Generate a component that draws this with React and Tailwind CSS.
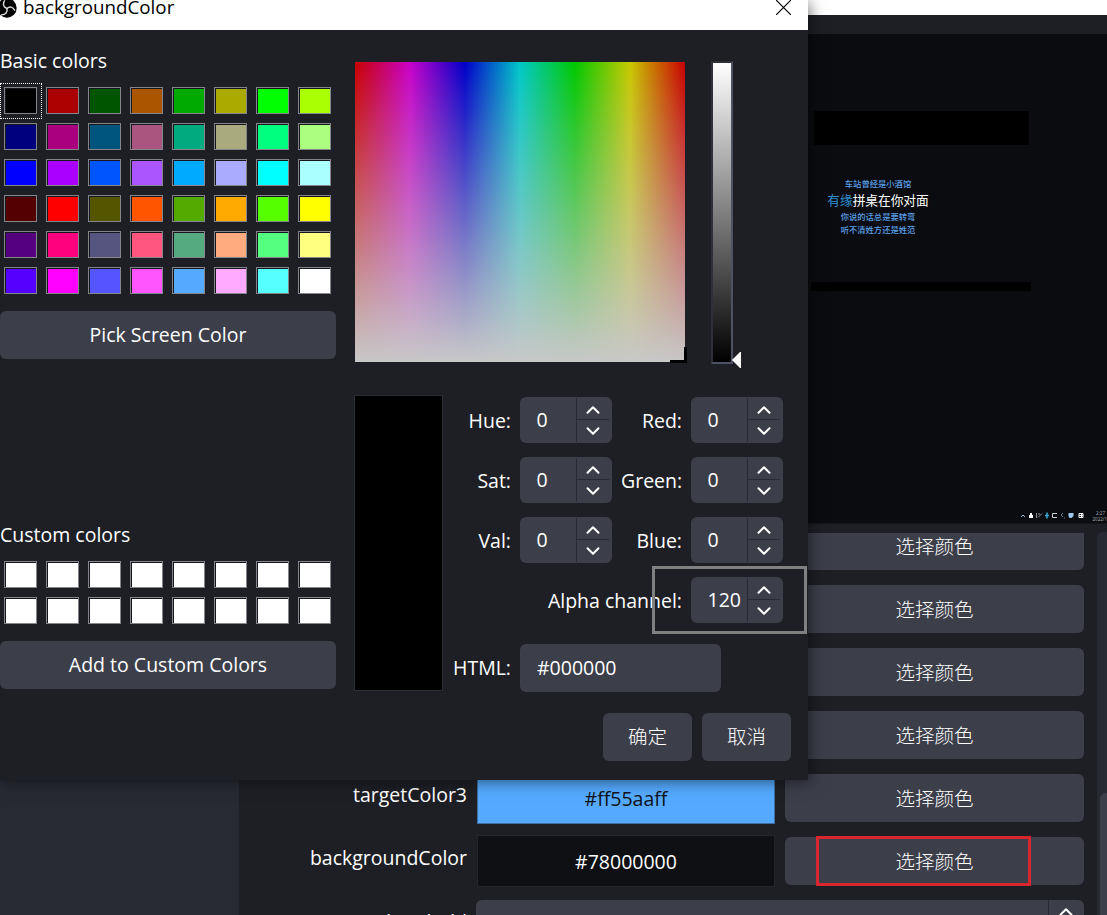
import { ChevronUp, ChevronDown } from 'lucide-react';

const BASIC_COLORS = [
  ['#000000', '#aa0000', '#005500', '#aa5500', '#00aa00', '#aaaa00', '#00ff00', '#aaff00'],
  ['#00007f', '#aa007f', '#00557f', '#aa557f', '#00aa7f', '#aaaa7f', '#00ff7f', '#aaff7f'],
  ['#0000ff', '#aa00ff', '#0055ff', '#aa55ff', '#00aaff', '#aaaaff', '#00ffff', '#aaffff'],
  ['#550000', '#ff0000', '#555500', '#ff5500', '#55aa00', '#ffaa00', '#55ff00', '#ffff00'],
  ['#55007f', '#ff007f', '#55557f', '#ff557f', '#55aa7f', '#ffaa7f', '#55ff7f', '#ffff7f'],
  ['#5500ff', '#ff00ff', '#5555ff', '#ff55ff', '#55aaff', '#ffaaff', '#55ffff', '#ffffff'],
];

const CUSTOM_COLORS = Array(16).fill('#ffffff');

const SETTINGS = [
  {},
  {},
  {},
  {},
  { label: 'targetColor3', value: '#ff55aaff', box: 'bg-[#55aaff] border-[#3f6ea3] text-[#10131a]' },
  { label: 'backgroundColor', value: '#78000000', box: 'bg-[#0e1013] border-[#24262d] text-white', marked: true },
];

function Swatch({ color, selected }) {
  return (
    <div className="relative h-[27px] w-[33px] border border-[#85868c]">
      <div className="h-full w-full border-t border-l border-[#15161b]" style={{ backgroundColor: color }} />
      {selected && <div className="absolute -top-[5px] -left-[5px] h-9 w-[42px] border border-dotted border-white" />}
    </div>
  );
}

function SpinBox({ value }) {
  return (
    <div className="flex h-[46px] w-[92px] rounded-md bg-[#3c3e4a] leading-[46px]">
      <div className="w-[56px] pl-[16.5px]">{value}</div>
      <div className="my-px mr-[3px] flex flex-1 flex-col border-l border-[#272a33]">
        <div className="flex h-[22px] items-center justify-center border-b border-[#272a33] pt-0.5">
          <ChevronUp className="h-[22px] w-[22px]" strokeWidth={2.2} />
        </div>
        <div className="flex h-[22px] items-center justify-center">
          <ChevronDown className="h-[22px] w-[22px]" strokeWidth={2.2} />
        </div>
      </div>
    </div>
  );
}

function Button({ className, children }) {
  return (
    <button className={`block h-12 rounded-md bg-[#3c3e4a] text-center text-white ${className}`}>{children}</button>
  );
}

function ObsLogo() {
  return (
    <svg viewBox="0 0 20 20" className="h-5 w-5 shrink-0">
      <circle cx="10" cy="10" r="9.7" fill="#000" />
      <g fill="none" stroke="#dcdcdc" strokeWidth="1.4" strokeLinecap="round">
        <path d="M10 10.5C6.5 9.5 5.5 6 7.5 2.8" />
        <path d="M10 10.5C12.6 8 16 8.8 17.7 12.2" />
        <path d="M10 10.5C10.8 14 8.5 16.8 4.8 16.8" />
      </g>
    </svg>
  );
}

function TrayIcons() {
  return (
    <svg viewBox="0 0 74 16" className="h-4 w-[74px]" fill="none" stroke="#dfe3e8">
      <path d="M3 9l2-2 2 2" stroke="#9db4c8" />
      <path d="M12 5h2v2h1v3h-4V7h1z" fill="#fff" stroke="none" />
      <path d="M18.5 5v5M20 9.5l4-4M20 6h2" stroke="#8d9299" />
      <path d="M29 4.5v6M27 7.5h4" stroke="#38a9d6" strokeWidth="1.5" />
      <path d="M39 5.5h-4.5v4H39" stroke="#c9ccd0" />
      <path d="M45 5l-2 2 2 2M46 10h1" stroke="#66788c" />
      <path d="M50.5 5h5v3l-2 2h-2l-1-2z" fill="#9fc8ec" stroke="none" />
      <path d="M61 5.5h4v4h-4zM61 7.5h4M63.5 5.5v4" stroke="#fff" />
    </svg>
  );
}

function Preview() {
  return (
    <div className="flex h-[490px] flex-col border-b border-[#15161a] bg-[#0b0c10] pl-[809px]">
      <div className="mt-[77px] ml-[5px] h-[34px] w-[215px] bg-black" />
      <div className="mt-8 w-[138px] text-center text-[8.3px] leading-[14px] font-medium whitespace-nowrap text-[#5a9fe8]">
        <div>车站曾经是小酒馆</div>
        <div className="text-[12.7px] leading-[19px] font-normal text-white">
          <span className="text-[#2d8fd0]">有缘</span>拼桌在你对面
        </div>
        <div>你说的话总是要转弯</div>
        <div className="-mt-px">听不清姓方还是姓范</div>
      </div>
      <div className="mt-[45px] ml-0.5 h-[9px] w-[220px] bg-black" />
      <div className="mt-auto flex h-[15px] justify-end">
        <TrayIcons />
        <div className="w-[15px] pt-0.5 text-right text-[4.5px] leading-[6px] text-[#aeb2b8]">
          <div className="pr-0.5">2:27</div>
          <div>2022/1</div>
        </div>
      </div>
    </div>
  );
}

function Settings() {
  return (
    <div className="flex h-[391px]">
      <div className="w-[239px] bg-[#272a33]" />
      <div className="mt-[9px] flex-1 overflow-hidden">
        <div className="-mt-[13px] flex flex-col gap-[11px]">
          {SETTINGS.map((row, i) => (
            <div key={i} className="flex h-[52px] items-center gap-2.5">
              <div className="w-[228px] pb-1.5 text-right">{row.label}</div>
              <div className={`h-[52px] w-[298px] text-center leading-[51px] ${row.value ? `border ${row.box}` : ''}`}>
                {row.value}
              </div>
              <div className="relative">
                <Button className="w-[299px] pt-0.5 font-light">选择颜色</Button>
                {row.marked && <div className="absolute -top-px left-[31px] h-[50px] w-[215px] border-3 border-[#d9262e]" />}
              </div>
            </div>
          ))}
          <div className="mt-0.5 flex gap-[9px]">
            <div className="w-[228px] pt-[7px] text-right">threshold</div>
            <div className="flex h-12 w-[608px] justify-end rounded-md bg-[#3c3e4a]">
              <div className="flex w-9 justify-center border-l border-[#272a33] pt-px pr-0.5">
                <ChevronUp className="h-[22px] w-[22px]" strokeWidth={2.2} />
              </div>
            </div>
          </div>
        </div>
      </div>
      <div className="mt-2 w-2.5 rounded-tl-md bg-[#272a33] pt-[261px] pl-[3px]">
        <div className="h-[122px] rounded-tl-md bg-[#3c3e4a]" />
      </div>
    </div>
  );
}

function ColorMap() {
  return (
    <div className="relative h-[300px] w-[330px] bg-[linear-gradient(to_right,#c80000,#c800c8,#0000c8,#00c8c8,#00c800,#c8c800,#c80000)]">
      <div className="h-full w-full bg-[linear-gradient(to_bottom,#c8c8c800,#c8c8c8)]" />
      <div className="absolute -right-0.5 -bottom-px h-4 w-[17px] border-r-3 border-b-3 border-black" />
    </div>
  );
}

function ValueSlider() {
  return (
    <div className="relative -mt-px h-[303px] w-[22px] border-2 border-t-[#2d303a] border-r-[#4d5362] border-b-[#4d5362] border-l-[#2d303a] bg-[linear-gradient(to_bottom,#fff,#000)] bg-origin-padding">
      <svg viewBox="0 0 9 16" className="absolute top-[289px] left-[19px] h-4 w-[9px]">
        <path d="M0 8L8 0h1v16H8z" fill="#fff" />
      </svg>
    </div>
  );
}

function ColorDialog() {
  return (
    <div className="absolute top-0 left-0 flex h-[780px] w-[808px] flex-col bg-[#1e1f25] shadow-[2px_2px_14px_rgba(0,0,0,0.5)]">
      <div className="flex h-[30px] items-start bg-white text-black">
        <div className="-mt-0.5 -ml-[3px]">
          <ObsLogo />
        </div>
        <div className="-mt-[7px] ml-1.5 flex-1 text-[18.8px] leading-7">backgroundColor</div>
        <svg viewBox="0 0 15 15" className="mr-[17px] h-[15px] w-[15px]">
          <path d="M0 0l15 15M15 0L0 15" stroke="#000" strokeWidth="1.2" />
        </svg>
      </div>

      <div className="flex">
        {/* Palettes */}
        <div className="w-[336px]">
          <div className="mt-4 h-[41px] leading-[30px]">Basic colors</div>
          <div className="ml-1 grid grid-cols-[repeat(8,33px)] gap-[9px]">
            {BASIC_COLORS.flat().map((c, i) => (
              <Swatch key={i} color={c} selected={i === 0} />
            ))}
          </div>
          <Button className="mt-[17px] w-full">Pick Screen Color</Button>
          <div className="mt-[161px] h-[41px] leading-[30px]">Custom colors</div>
          <div className="ml-1 grid grid-cols-[repeat(8,33px)] gap-[9px]">
            {CUSTOM_COLORS.map((c, i) => (
              <Swatch key={i} color={c} />
            ))}
          </div>
          <Button className="mt-[17px] w-full">Add to Custom Colors</Button>
        </div>

        {/* Picker and channel values */}
        <div className="mt-8 ml-[18px]">
          <div className="ml-px flex gap-[26px]">
            <ColorMap />
            <ValueSlider />
          </div>
          <div className="mt-[31px] flex">
            <div className="h-[296px] w-[89px] border border-[#2b2d35] bg-black" />
            <div className="mt-0.5 flex flex-col">
              <div className="grid auto-rows-[46px] grid-cols-[68px_92px_61px_92px] gap-x-[9px] gap-y-3.5 text-right leading-[48px] [&>div]:text-left">
                <span>Hue:</span>
                <SpinBox value="0" />
                <span>Red:</span>
                <SpinBox value="0" />
                <span>Sat:</span>
                <SpinBox value="0" />
                <span>Green:</span>
                <SpinBox value="0" />
                <span>Val:</span>
                <SpinBox value="0" />
                <span>Blue:</span>
                <SpinBox value="0" />
              </div>
              <div className="relative mt-3.5 flex h-[46px] w-[340px] justify-end gap-[9px] leading-[48px]">
                <span>Alpha channel:</span>
                <SpinBox value="120" />
                <div className="absolute -top-[11px] -right-6 h-[68px] w-[155px] border-3 border-[#808080]" />
              </div>
              <div className="mt-[21px] flex gap-[9px] leading-[47px]">
                <span className="w-[68px] text-right">HTML:</span>
                <div className="h-12 w-[201px] rounded-md bg-[#3c3e4a] pl-[17px]">#000000</div>
              </div>
            </div>
          </div>
          <div className="mt-[21px] flex gap-2.5 pl-[249px]">
            <Button className="w-[89px] font-light">确定</Button>
            <Button className="w-[89px] font-light">取消</Button>
          </div>
        </div>
      </div>
    </div>
  );
}

export default function App() {
  return (
    <div className="relative h-[915px] w-[1107px] overflow-hidden bg-[#1e1f25] font-['Open_Sans','Noto_Sans_CJK_SC',sans-serif] text-[19.5px] text-white">
      <div className="h-[15px] bg-white" />
      <div className="h-[19px] bg-[#1e1f25]" />
      <Preview />
      <Settings />
      <ColorDialog />
    </div>
  );
}
